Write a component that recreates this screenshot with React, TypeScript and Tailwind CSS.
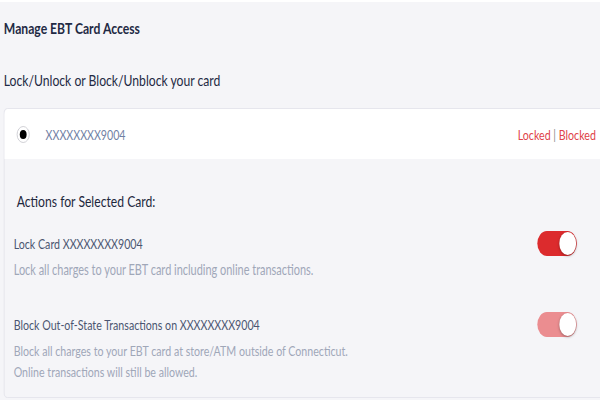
import React from "react";

function Toggle({ light }: { light?: boolean }) {
  return (
    <div
      className={
        "flex h-[25px] w-[52px] shrink-0 items-center justify-end rounded-full p-[1px] " +
        (light ? "bg-[#eb8d90]" : "bg-[#dc2b2d]")
      }
    >
      <div className="h-[23px] w-[22px] rounded-full bg-white shadow-[0_1px_3px_rgba(0,0,0,0.35)]" />
    </div>
  );
}

export default function App() {
  return (
    <div className="h-[400px] w-[600px] overflow-hidden border-t-2 border-white bg-[#f5f5f8]">
      <div
        className="w-[790px] origin-top-left scale-x-[0.76] pl-[5px] text-[#1f2a44]"
        style={{ fontFamily: "Lato, 'Open Sans', sans-serif" }}
      >
        <h1 className="pt-[14px] text-[16px] font-bold leading-6">Manage EBT Card Access</h1>
        <p className="mt-[28px] text-[16px] leading-6">Lock/Unlock or Block/Unblock your card</p>

        <div className="mt-[16px] w-[800px] rounded-[5px] border border-[#e4e4ea]">
          <div className="flex h-[50px] items-center rounded-t-[5px] bg-white pl-[16px] pr-[20px]">
            <div className="flex h-[17px] w-[17px] items-center justify-center rounded-full border border-[#c9c9cf] bg-white">
              <div className="h-[9px] w-[9px] rounded-full bg-black" />
            </div>
            <span className="ml-[21px] text-[14px] text-[#6f80a4]">XXXXXXXX9004</span>
            <span className="ml-auto text-[14px] text-[#e0434a]">
              Locked <span className="text-[#8a8a8a]">|</span> Blocked
            </span>
          </div>

          <div className="pb-[15px] pl-[12px] pr-[45px] pt-[30px]">
            <h2 className="pl-1 text-[16px] leading-6 text-[#1e283d]">Actions for Selected Card:</h2>

            <div className="mt-[18px] flex items-center justify-between">
              <span className="text-[14px] leading-5 text-[#4b5571]">Lock Card XXXXXXXX9004</span>
              <Toggle />
            </div>
            <p className="mt-[4px] text-[14.4px] leading-5 text-[#a0a7b8]">
              Lock all charges to your EBT card including online transactions.
            </p>

            <div className="mt-[32px] flex items-center justify-between">
              <span className="text-[14px] leading-5 text-[#4b5571]">
                Block Out-of-State Transactions on XXXXXXXX9004
              </span>
              <Toggle light />
            </div>
            <p className="mt-[3px] text-[14px] leading-[21px] text-[#a0a7b8]">
              Block all charges to your EBT card at store/ATM outside of Connecticut.
              <br />
              Online transactions will still be allowed.
            </p>
          </div>
        </div>
      </div>
    </div>
  );
}
